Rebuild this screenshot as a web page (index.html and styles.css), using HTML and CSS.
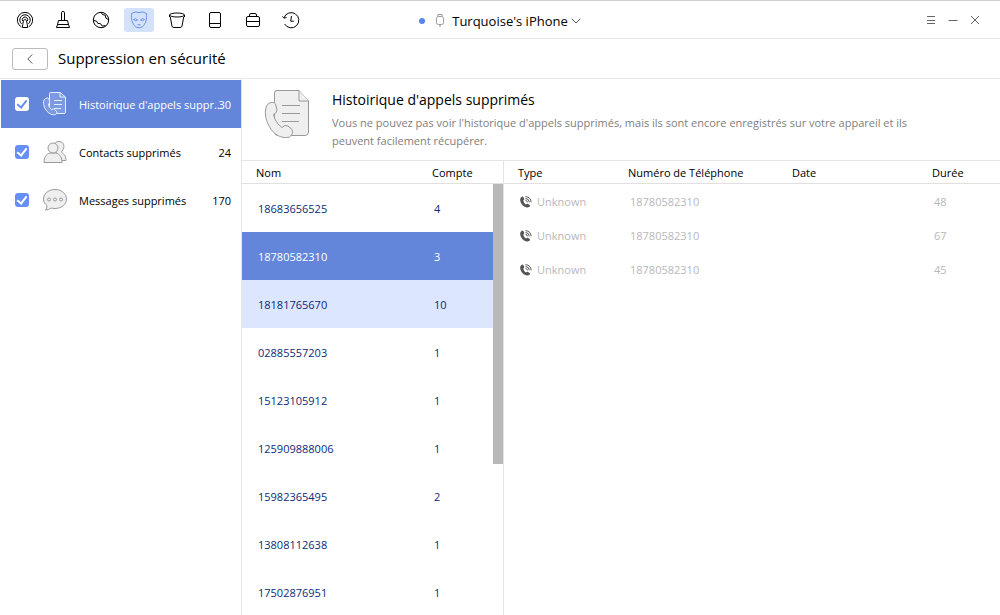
FILE: index.html
```html
<!DOCTYPE html>
<html lang="fr">
<head>
<meta charset="utf-8">
<title>Suppression en sécurité</title>
<link rel="stylesheet" href="styles.css">
</head>
<body>
<header class="topbar">
  <nav class="tools" aria-label="Outils">
    <button class="tool" aria-label="AirPlay"><svg viewBox="0 0 18 18"><path d="M5.300 15.800A7.700 7.700 0 1 1 12.700 15.800M5.600 12.900A5.200 5.200 0 1 1 12.400 12.900M6.700 10.100A2.700 2.700 0 1 1 11.300 10.100"/><path d="M9 8.200c-1.600 0-2.200 4.500-2.600 8.300h5.200C11.200 12.700 10.600 8.200 9 8.200z"/></svg></button>
    <button class="tool" aria-label="Nettoyer"><svg viewBox="0 0 18 18"><path d="M7.500 9.500V1.500q0-1 1.500-1t1.500 1V9.500M4.500 9.500h9l1 4h-11zM3.500 13.500L2.500 16.500h13l-1-3"/></svg></button>
    <button class="tool" aria-label="Internet"><svg viewBox="0 0 18 18"><circle cx="9" cy="9" r="7.700"/><path d="M9 1.200l1.500 2.300 2.800.7.500 2.800 2.800 1.800M1.300 9.500l3.200.6 1.300 2.300 2.700.3 1.700 2.300 3.300-.3"/></svg></button>
    <button class="tool tool-active" aria-label="Confidentialité"><svg viewBox="0 0 18 18"><path d="M1.500 2.500Q5 0 9 1.500q4-1.500 7.500 1c.5 5-.5 10.500-4.300 13.500q-3.200 1.500-6.400 0C2 13 1 7.500 1.500 2.500z"/><path d="M3.500 8.500q2-2 4 .5-2 1.500-4-.5zM14.500 8.500q-2-2-4 .5 2 1.500 4-.5zM7.500 13.500q1.500.8 3 0"/></svg></button>
    <button class="tool" aria-label="Effacer"><svg viewBox="0 0 18 18"><ellipse cx="9" cy="4" rx="7.500" ry="2"/><path d="M1.500 4v2M16.500 4v2M2.300 6l1.700 9.200Q4.300 16.500 6 16.500h6q1.700 0 2-1.300L15.700 6"/></svg></button>
    <button class="tool" aria-label="Appareil"><svg viewBox="0 0 18 18"><rect x="3.500" y="1.500" width="11" height="15" rx="1.500"/><path d="M3.500 12.500h11"/></svg></button>
    <button class="tool" aria-label="Boîte à outils"><svg viewBox="0 0 18 18"><rect x="2.500" y="5.500" width="13" height="10" rx="1.500"/><path d="M5.500 5.500V4q0-1.500 1.500-1.500h4q1.500 0 1.500 1.500v1.500M2.500 10.500h13"/></svg></button>
    <button class="tool" aria-label="Historique"><svg viewBox="0 0 18 18"><path d="M2 6.800A7.600 7.600 0 1 1 2.600 13M9.500 5l-.8 5.200h3.200"/><path d="M.3 5.500l1.700 1.600 2.500-.6"/></svg></button>
  </nav>
  <button class="device"><span class="status"></span><svg class="plug" viewBox="0 0 8 14"><rect x=".5" y="2.500" width="7" height="8" rx="2"/><path d="M2 2.500v-2h4v2M4 10.500V13"/></svg><span>Turquoise's iPhone</span><svg class="chevron" viewBox="0 0 10 6"><path d="M.7.700L5 5 9.300.700"/></svg></button>
  <div class="window-controls">
    <button aria-label="Menu"><svg viewBox="0 0 10 10"><path d="M1 1.500h8M1 5.500h8M1 8.500h8"/></svg></button>
    <button aria-label="Réduire"><svg viewBox="0 0 10 10"><path d="M.5 5.500h9"/></svg></button>
    <button aria-label="Fermer"><svg viewBox="0 0 10 10"><path d="M1 1l8 8M9 1L1 9"/></svg></button>
  </div>
</header>
<div class="titlebar">
  <button class="back" aria-label="Retour"><svg viewBox="0 0 6 10"><path d="M5.300.500L.8 5l4.500 4.500"/></svg></button>
  <h1>Suppression en sécurité</h1>
</div>
<main class="workspace">
  <aside class="sidebar">
    <label class="category category-active">
      <input type="checkbox" checked>
      <svg viewBox="0 0 24 24"><path class="fill" d="M7.500.5h9.500l5.500 4.500V20q0 1.500-1.500 1.500H8.500Q6.500 21.500 6.500 20V1.500q0-1 1-1z"/><path d="M17 .5v4.500h5.500M11 8.500h8M11 12.500h8M11 16.500h7"/><path class="fill" d="M2.500 6.500q2.500-1.500 3.500.5l.8 3q0 1.200-1.500 2 .5 3.700 3.500 5.700 1.500-1.200 2.500-.5l2.500 2.300q1 2-1.500 3.200C7 24 0 17.500.5 9.500q.3-2 2-3z"/></svg>
      <span class="name">Histoirique d'appels suppr...</span><span class="count">30</span>
    </label>
    <label class="category">
      <input type="checkbox" checked>
      <svg viewBox="0 0 24 24"><path class="fill" d="M15 15.500C13 13 12 10 11.500 7 10.500 3.500 13 1.500 16 1.500c5 0 6.500 5.500 3 9.500-.5 1.200 0 2 1.200 2.800 2 1.200 2.800 3.700 2.800 6.700h-5z"/><path class="fill" d="M1 22.500c0-5 2-8.500 6-9.500h6c4 1 6 4.500 6 9.500z"/><circle class="fill" cx="10" cy="8" r="5"/></svg>
      <span class="name">Contacts supprimés</span><span class="count">24</span>
    </label>
    <label class="category">
      <input type="checkbox" checked>
      <svg viewBox="0 0 24 24"><path class="fill" d="M12 1.500c6.500 0 11.500 4.200 11.500 9.500S18.500 20.500 12 20.500q-2 0-3.700-.5-2.800 2-5.800 2Q4 20.500 4 17.500C2 16 .5 14 .5 11 .5 5.700 5.500 1.500 12 1.500z"/><circle cx="6" cy="11.500" r="1.500"/><circle cx="12" cy="11.500" r="1.500"/><circle cx="18" cy="11.500" r="1.500"/></svg>
      <span class="name">Messages supprimés</span><span class="count">170</span>
    </label>
  </aside>
  <section class="content">
    <div class="intro">
      <svg viewBox="0 0 46 50"><path class="fill" d="M13 .500h22L44.500 11v31q0 3.500-3.500 3.500H15q-4.500 0-4.500-3V3Q10.500.500 13 .500z"/><path class="fill" d="M35 .500V11h9.500"/><path d="M18 15.500h18M18 23.500h18M18 31.500h17"/><path class="fill" d="M4.500 13.500q5-2.500 7 .5l1.500 6q0 3-3.500 4.500c1 5 4 10 8.500 13q3-3.500 6-1.500l4 3.500q2 4-2.500 7.500C11 51 0 33 1.500 20q.5-4.500 3-6.500z"/></svg>
      <div>
        <h2>Histoirique d'appels supprimés</h2>
        <p>Vous ne pouvez pas voir l'historique d'appels supprimés, mais ils sont encore enregistrés sur votre appareil et ils peuvent facilement récupérer.</p>
      </div>
    </div>
    <div class="panes">
      <div class="numbers">
        <table>
          <thead><tr><th>Nom</th><th class="col-total">Compte</th></tr></thead>
          <tbody>
            <tr><td>18683656525</td><td>4</td></tr>
            <tr class="selected"><td>18780582310</td><td>3</td></tr>
            <tr class="hovered"><td>18181765670</td><td>10</td></tr>
            <tr><td>02885557203</td><td>1</td></tr>
            <tr><td>15123105912</td><td>1</td></tr>
            <tr><td>125909888006</td><td>1</td></tr>
            <tr><td>15982365495</td><td>2</td></tr>
            <tr><td>13808112638</td><td>1</td></tr>
            <tr><td>17502876951</td><td>1</td></tr>
          </tbody>
        </table>
        <div class="track"><div class="thumb"></div></div>
      </div>
      <div class="calls">
        <table>
          <thead><tr><th class="col-type">Type</th><th class="col-phone">Numéro de Téléphone</th><th>Date</th><th class="col-time">Durée</th></tr></thead>
          <tbody>
            <tr><td><span class="type"><svg viewBox="0 0 12 12"><use href="#call"/></svg>Unknown</span></td><td>18780582310</td><td></td><td>48</td></tr>
            <tr><td><span class="type"><svg viewBox="0 0 12 12"><use href="#call"/></svg>Unknown</span></td><td>18780582310</td><td></td><td>67</td></tr>
            <tr><td><span class="type"><svg viewBox="0 0 12 12"><use href="#call"/></svg>Unknown</span></td><td>18780582310</td><td></td><td>45</td></tr>
          </tbody>
        </table>
      </div>
    </div>
  </section>
</main>
<svg class="symbols" aria-hidden="true"><symbol id="call" viewBox="0 0 12 12"><path class="handset" d="M1.800.8q1-.5 1.600.3l.8 2q.1.800-1 1.500.5 2.500 2.700 4 .9-1 1.700-.8l2.100 1.200q.8.900-.2 1.700C5.500 13.500-.5 7.500.2 3q.3-1.500 1.600-2.200z"/><path class="waves" d="M5.500 4.300q1.700.2 2 2M5.500 2.400q3.500.4 3.900 3.900M5.500.6q5.200.5 5.700 5.700"/></symbol></svg>
</body>
</html>
```
FILE: styles.css
```css
*, *::before, *::after { box-sizing: border-box; }

body {
  margin: 0;
  height: 100vh;
  display: flex;
  flex-direction: column;
  overflow: hidden;
  background: #fff;
  color: #000;
  font: 11px/18px "Open Sans", "Noto Sans", sans-serif;
}

button {
  border: 0;
  padding: 0;
  background: none;
  color: inherit;
  font: inherit;
  display: flex;
  align-items: center;
  justify-content: center;
}

svg { fill: none; stroke: currentColor; flex: none; }
h1, h2, p { margin: 0; font-weight: 400; }
.symbols { display: none; }

.topbar {
  flex: none;
  height: 39px;
  display: grid;
  grid-template-columns: 1fr auto 1fr;
  align-items: center;
  border-top: 1px solid #cfcfcf;
  border-bottom: 1px solid #e4e4e4;
}
.tools { display: flex; gap: 8px; padding-left: 10px; }
.tool { width: 30px; height: 24px; border-radius: 3px; }
.tool svg { width: 18px; height: 18px; }
.tool-active { background: #d4e2f9; color: #6c91f0; }

.device { font-size: 13px; line-height: 20px; padding-top: 2px; }
.status { width: 6px; height: 6px; border-radius: 50%; background: #5586f0; margin-right: 11px; }
.plug { width: 8px; height: 14px; margin-right: 8px; color: #999; }
.chevron { width: 10px; height: 6px; margin-left: 3px; color: #555; }

.window-controls { display: flex; justify-content: flex-end; gap: 12px; padding-right: 20px; color: #666; }
.window-controls svg { width: 10px; height: 10px; }

.titlebar {
  flex: none;
  height: 40px;
  display: flex;
  align-items: center;
  gap: 10px;
  padding-left: 12px;
  border-bottom: 1px solid #e8e8e8;
}
.back { width: 36px; height: 22px; border: 1px solid #bbb; border-radius: 3px; color: #555; }
.back svg { width: 6px; height: 10px; }
h1 { font-size: 15px; line-height: 20px; padding-bottom: 1px; }

.workspace { flex: 1; min-height: 0; display: flex; }
.sidebar { width: 242px; flex: none; padding: 1px 0 0 1px; border-right: 1px solid #e4e4e4; }

.category {
  height: 48px;
  display: grid;
  grid-template-columns: 28px 36px 1fr 30px;
  align-items: center;
  padding: 0 10px 0 14px;
}
.category svg { width: 24px; height: 24px; color: #999; }
.category .fill, .intro .fill { fill: #efefef; }
.category .name { grid-area: 1 / 3 / 2 / 5; white-space: nowrap; }
.category .count { grid-area: 1 / 4 / 2 / 5; text-align: right; }
.category .name, .category .count { padding-top: 1px; }
.category-active { background: #6486da; color: #fff; }
.category-active svg { color: #e6edff; }
.category-active .fill { fill: #7c9ae2; }

input[type="checkbox"] {
  appearance: none;
  width: 14px;
  height: 14px;
  margin: 0;
  border-radius: 3px;
  background: #6690f5;
  color: #fff;
  display: flex;
  justify-content: center;
  align-items: flex-start;
  padding-top: 1px;
}
input[type="checkbox"]:checked::after {
  content: "";
  width: 6px;
  height: 10px;
  border: solid currentColor;
  border-width: 0 2px 2px 0;
  transform: rotate(38deg);
}
.category-active input[type="checkbox"] { background: #fff; color: #6690f5; }

.content { flex: 1; min-width: 0; display: flex; flex-direction: column; }
.intro { flex: none; display: flex; gap: 22px; padding: 11px 70px 9px 22px; }
.intro svg { width: 46px; height: 50px; color: #999; }
.intro h2 { font-size: 14px; line-height: 20px; }
.intro p { color: #808080; padding-top: 4px; }
.intro > div { padding-bottom: 1px; }

.panes { flex: 1; min-height: 0; display: flex; border-top: 1px solid #e4e4e4; }
.numbers { position: relative; width: 262px; flex: none; border-right: 1px solid #e4e4e4; overflow: hidden; }
.calls { flex: 1; min-width: 0; }

table { width: 100%; table-layout: fixed; border-collapse: separate; border-spacing: 0; }
th, td { padding: 1px 0 0 16px; text-align: left; font-weight: 400; }
th { height: 23px; padding-left: 14px; border-bottom: 1px solid #e0e0e0; }

.numbers td { height: 48px; color: #0b2a78; }
.numbers .col-total { width: 85px; }
.numbers .selected td { background: #6486da; color: #fff; }
.numbers .hovered td { background: #dce6fd; }
.track { position: absolute; top: 23px; right: 0; bottom: 0; width: 10px; background: #fff; }
.thumb { height: 65%; background: #bab8b8; }

.calls td { height: 34px; color: #b8b8b8; }
.col-type { width: 110px; }
.col-phone { width: 164px; }
.col-time { width: 82px; }
.type { display: flex; align-items: center; gap: 5px; }
.type svg { width: 12px; height: 12px; }
.handset { fill: #555; stroke: none; }
.waves { fill: none; stroke: #555; }
```
